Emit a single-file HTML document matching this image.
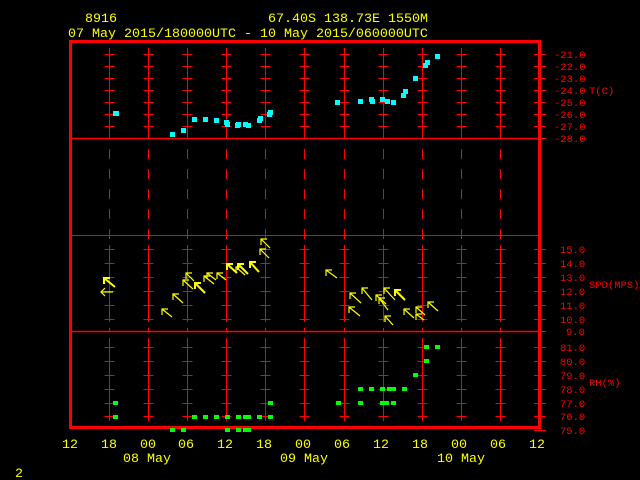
<!DOCTYPE html>
<html><head><meta charset="utf-8"><style>
html,body{margin:0;padding:0;background:#000;width:640px;height:480px;overflow:hidden}
svg{display:block}
text{font-family:"Liberation Mono","DejaVu Sans Mono",monospace}
.y{fill:#ffff00;font-size:13.33px}
.r{fill:#ff0000;font-size:10.5px}
#grid line{shape-rendering:crispEdges}
</style></head><body>
<svg id="s" width="640" height="480" xmlns="http://www.w3.org/2000/svg">
<text class="y" x="85" y="22">8916</text>
<text class="y" x="268" y="22">67.40S  138.73E  1550M</text>
<text class="y" x="68" y="37">07 May 2015/180000UTC - 10 May 2015/060000UTC</text>
<g id="grid" stroke="#ff0000" fill="none"></g>
<rect x="70.5" y="41.5" width="469" height="386" stroke="#ff0000" stroke-width="3" fill="none"/>
<line x1="72" y1="138.5" x2="538" y2="138.5" stroke="#ff0000" stroke-width="1.5"/>
<line x1="72" y1="235.5" x2="538" y2="235.5" stroke="#ff0000" stroke-width="1"/>
<line x1="72" y1="331.5" x2="538" y2="331.5" stroke="#ff0000" stroke-width="1.5"/>
<g class="r">
<text x="554" y="58">-21.0</text><text x="554" y="70">-22.0</text><text x="554" y="82">-23.0</text>
<text x="554" y="94">-24.0</text><text x="554" y="106">-25.0</text><text x="554" y="118">-26.0</text>
<text x="554" y="130">-27.0</text><text x="554" y="142">-28.0</text>
<text x="589" y="94">T(C)</text>
<text x="560" y="253">15.0</text><text x="560" y="267">14.0</text><text x="560" y="281">13.0</text>
<text x="560" y="295">12.0</text><text x="560" y="309">11.0</text><text x="560" y="323">10.0</text>
<text x="566" y="335">9.0</text>
<text x="589" y="288">SPD(MPS)</text>
<text x="560" y="351">81.0</text><text x="560" y="365">80.0</text><text x="560" y="379">79.0</text>
<text x="560" y="393">78.0</text><text x="560" y="407">77.0</text><text x="560" y="420">76.0</text>
<text x="560" y="434">75.0</text>
<text x="589" y="386">RH(%)</text>
</g>
<g id="pts"></g>
<g id="arr" stroke="#ffff00" fill="none" stroke-width="1.2"></g>
<g class="y">
<text x="62" y="448">12</text><text x="101" y="448">18</text><text x="140" y="448">00</text>
<text x="178" y="448">06</text><text x="217" y="448">12</text><text x="256" y="448">18</text>
<text x="295" y="448">00</text><text x="334" y="448">06</text><text x="373" y="448">12</text>
<text x="412" y="448">18</text><text x="451" y="448">00</text><text x="490" y="448">06</text>
<text x="529" y="448">12</text>
<text x="123" y="462">08 May</text><text x="280" y="462">09 May</text><text x="437" y="462">10 May</text>
<text x="15" y="477">2</text>
</g>
</svg>
<script>
var NS="http://www.w3.org/2000/svg";
function el(p,t,a){var e=document.createElementNS(NS,t);for(var k in a)e.setAttribute(k,a[k]);p.appendChild(e);return e;}
var g=document.getElementById('grid');
var xs=[];for(var i=1;i<12;i++)xs.push(Math.round(70+i*39.08)+0.5);
var tY=[54,66,78,90,102,114,126],sY=[249,263,277,291,305,319],rY=[347,361,375,389,403,416];
xs.forEach(function(x){
 el(g,'line',{x1:x,y1:48,x2:x,y2:138});
 for(var y=149;y<232;y+=20)el(g,'line',{x1:x,y1:y,x2:x,y2:y+10});
 el(g,'line',{x1:x,y1:245,x2:x,y2:322});el(g,'line',{x1:x,y1:328,x2:x,y2:331});
 el(g,'line',{x1:x,y1:338,x2:x,y2:421});
 tY.concat(sY,rY).forEach(function(y){el(g,'line',{x1:x-5,y1:y+0.5,x2:x+5,y2:y+0.5});});
});
tY.concat([138],sY,[331],rY,[430]).forEach(function(y){el(g,'line',{x1:534,y1:y+0.5,x2:546,y2:y+0.5});});
var p=document.getElementById('pts');
var T=[[115,113],[116,113],[172,134],[183,130],[194,119],[205,119],[216,120],[226,122],[227,124],[237,125],[238,124],[245,124],[248,125],[259,120],[260,118],[269,114],[270,112],[337,102],[360,101],[371,99],[372,101],[382,99],[387,101],[393,102],[403,95],[405,91],[415,78],[425,65],[427,62],[437,56]];
T.forEach(function(a){el(p,'rect',{x:a[0]-2,y:a[1]-2,width:5,height:5,fill:'#00ffff'});});
var R={403:[115,270,338,360,382,386,393],417:[115,194,205,216,227,238,245,248,259,270],430:[172,183,227,238,245,248],389:[360,371,382,389,393,404],375:[415],361:[426],347:[426,437]};
for(var y in R)R[y].forEach(function(x){el(p,'rect',{x:x-2,y:+y-2,width:5,height:4,fill:'#00ff00'});});
var ar=document.getElementById('arr');
var A=[[104,278,115,287,1],[162,309,172,317],[173,294,183,303],[186,273,194,281],[183,280,193,289],[195,283,205,293,1],[204,276,214,284],[207,273,216,280],[217,273,226,280],[227,264,237,273,1],[236,267,245,275],[238,264,248,274,1],[250,262,259,272,1],[261,239,270,248],[260,249,269,258],
[326,270,337,278],[350,293,361,303],[362,288,372,300],[349,307,360,316],[379,298,388,310],[384,288,395,300],[376,295,386,304],[385,316,393,325],[395,290,405,300,1],[404,309,414,318],[416,307,425,315],[416,314,424,320],[428,302,438,311]];
A.forEach(function(a){var w=a[4]?2:1.2;
 el(ar,'line',{x1:a[0],y1:a[1],x2:a[2],y2:a[3],'stroke-width':w});
 el(ar,'polyline',{points:(a[0]+6)+','+a[1]+' '+a[0]+','+a[1]+' '+a[0]+','+(a[1]+6),'stroke-width':w});});
el(ar,'line',{x1:101,y1:292,x2:113,y2:292});
el(ar,'polyline',{points:'105,288 101,292 105,296'});
</script>
</body></html>
